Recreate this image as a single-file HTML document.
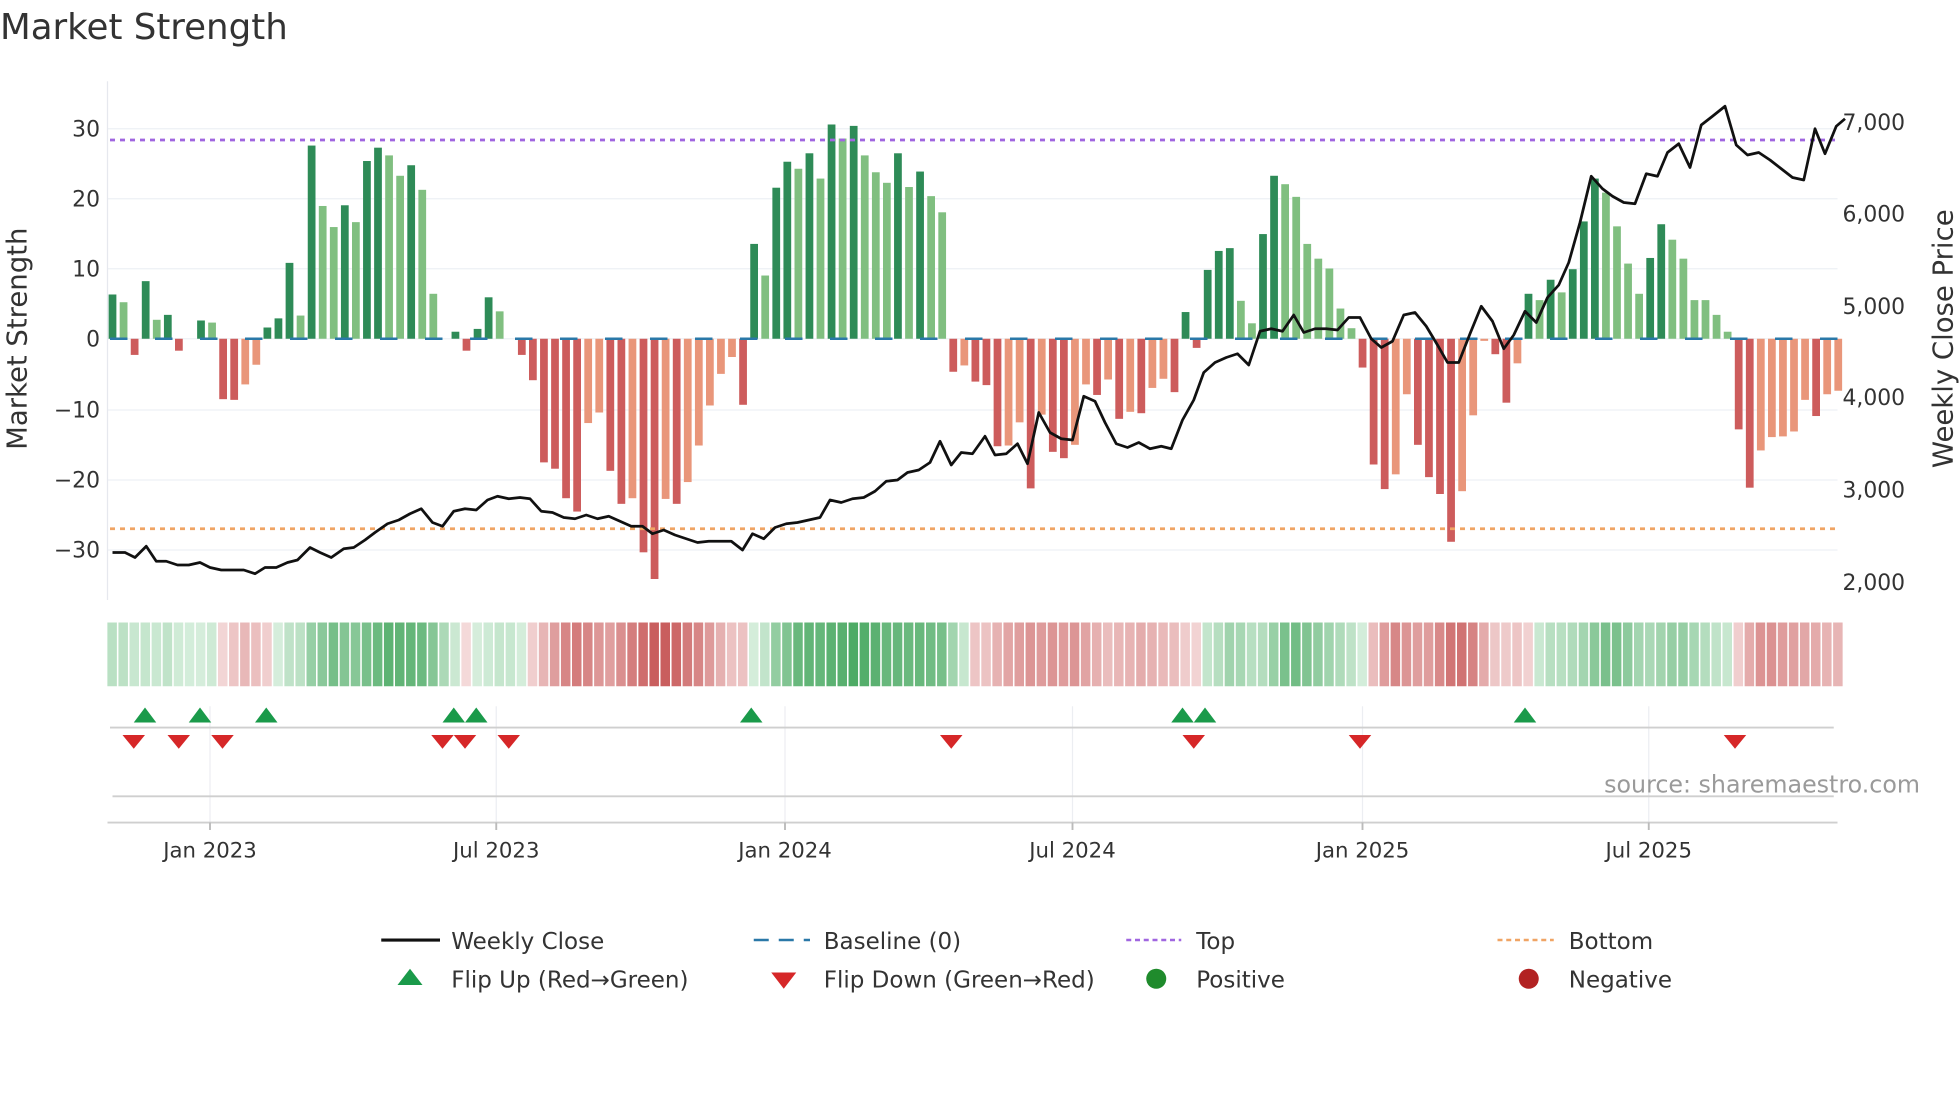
<!DOCTYPE html>
<html><head><meta charset="utf-8"><style>
html,body{margin:0;padding:0;background:#fff;width:1960px;height:1102px;overflow:hidden}
svg{display:block}
text{font-family:"DejaVu Sans","Liberation Sans",sans-serif;fill:#333}
</style></head><body>
<svg id="s" width="1960" height="1102" viewBox="0 0 1568 881.6" xmlns="http://www.w3.org/2000/svg">
<text x="0" y="31" font-size="28.5" fill="#333">Market Strength</text>
<g stroke="#edf0f5" stroke-width="1">
<line x1="86" x2="1470" y1="103" y2="103"/><line x1="86" x2="1470" y1="159" y2="159"/><line x1="86" x2="1470" y1="215" y2="215"/><line x1="86" x2="1470" y1="271" y2="271"/><line x1="86" x2="1470" y1="328" y2="328"/><line x1="86" x2="1470" y1="384" y2="384"/><line x1="86" x2="1470" y1="440" y2="440"/>
</g>
<line x1="86" x2="86" y1="65" y2="480" stroke="#e6e8ee" stroke-width="1"/>
<g font-size="17.5" text-anchor="end">
<text x="80" y="109">30</text><text x="80" y="165">20</text><text x="80" y="221">10</text><text x="80" y="277">0</text><text x="80" y="334">−10</text><text x="80" y="390">−20</text><text x="80" y="446">−30</text>
</g>
<g font-size="17.5">
<text x="1474" y="104">7,000</text><text x="1474" y="177">6,000</text><text x="1474" y="251">5,000</text><text x="1474" y="324">4,000</text><text x="1474" y="398">3,000</text><text x="1474" y="472">2,000</text>
</g>
<text transform="translate(21,271) rotate(-90)" font-size="22" text-anchor="middle">Market Strength</text>
<text transform="translate(1562,271) rotate(-90)" font-size="22" text-anchor="middle">Weekly Close Price</text>
<g id="bars"></g>
<line x1="88" x2="1470" y1="271" y2="271" stroke="#2a78a8" stroke-width="2" stroke-dasharray="14 22"/>
<line x1="88" x2="1470" y1="112" y2="112" stroke="#a066e0" stroke-width="2.2" stroke-dasharray="4 4"/>
<line x1="88" x2="1470" y1="423" y2="423" stroke="#f0a464" stroke-width="2.2" stroke-dasharray="4 4"/>
<polyline id="price" fill="none" stroke="#111" stroke-width="2.2" stroke-linejoin="round"/>
<g id="strip"></g>
<g stroke="#eceef2" stroke-width="1">
<line x1="168" x2="168" y1="565" y2="660"/><line x1="397" x2="397" y1="565" y2="660"/><line x1="628" x2="628" y1="565" y2="660"/><line x1="858" x2="858" y1="565" y2="660"/><line x1="1090" x2="1090" y1="565" y2="660"/><line x1="1319" x2="1319" y1="565" y2="660"/>
</g>
<line x1="88" x2="1467" y1="582" y2="582" stroke="#cfcfcf" stroke-width="1.5"/>
<line x1="90" x2="1467" y1="637" y2="637" stroke="#cfcfcf" stroke-width="1.5"/>
<line x1="86" x2="1470" y1="658" y2="658" stroke="#cfcfcf" stroke-width="1.5"/>
<g stroke="#bbb" stroke-width="1.5">
<line x1="168" x2="168" y1="658" y2="664"/><line x1="397" x2="397" y1="658" y2="664"/><line x1="628" x2="628" y1="658" y2="664"/><line x1="858" x2="858" y1="658" y2="664"/><line x1="1090" x2="1090" y1="658" y2="664"/><line x1="1319" x2="1319" y1="658" y2="664"/>
</g>
<g id="flips"></g>
<text x="1536" y="634" font-size="19" text-anchor="end" style="fill:#9a9a9a">source: sharemaestro.com</text>
<g font-size="17" text-anchor="middle">
<text x="168" y="686">Jan 2023</text><text x="397" y="686">Jul 2023</text><text x="628" y="686">Jan 2024</text><text x="858" y="686">Jul 2024</text><text x="1090" y="686">Jan 2025</text><text x="1319" y="686">Jul 2025</text>
</g>
<g font-size="18.4">
<line x1="305" x2="352" y1="752" y2="752" stroke="#111" stroke-width="2.5"/>
<text x="361" y="759">Weekly Close</text>
<line x1="603" x2="648" y1="752" y2="752" stroke="#2a78a8" stroke-width="2" stroke-dasharray="12 8"/>
<text x="659" y="759">Baseline (0)</text>
<line x1="901" x2="945" y1="752" y2="752" stroke="#a066e0" stroke-width="2" stroke-dasharray="4 3"/>
<text x="957" y="759">Top</text>
<line x1="1198" x2="1243" y1="752" y2="752" stroke="#f0a464" stroke-width="2" stroke-dasharray="4 3"/>
<text x="1255" y="759">Bottom</text>
<polygon points="318,788 338,788 328,775" fill="#1a9a4a"/>
<text x="361" y="790">Flip Up (Red→Green)</text>
<polygon points="617,778 637,778 627,791" fill="#d62728"/>
<text x="659" y="790">Flip Down (Green→Red)</text>
<circle cx="925" cy="783" r="8" fill="#1f8b2c"/>
<text x="957" y="790">Positive</text>
<circle cx="1223" cy="783" r="8" fill="#b22222"/>
<text x="1255" y="790">Negative</text>
</g>
</svg>
<script>
var d="G6.3 L5.2 R-2.3 G8.2 L2.7 G3.4 R-1.7 Z0 G2.6 L2.3 R-8.6 R-8.7 O-6.5 O-3.7 G1.6 G2.9 G10.8 L3.3 G27.5 L18.9 L15.9 G19 L16.6 G25.3 G27.2 L26.1 L23.2 G24.7 L21.2 L6.4 Z0 G1 R-1.7 G1.4 G5.9 L3.9 Z0 R-2.3 R-5.9 R-17.6 R-18.5 R-22.7 R-24.6 O-12 O-10.5 R-18.8 R-23.5 O-22.7 R-30.4 R-34.2 O-22.8 R-23.5 O-20.4 O-15.2 O-9.5 O-5 O-2.6 R-9.4 G13.5 L9 G21.5 G25.2 L24.2 G26.4 L22.8 G30.5 L28.5 G30.3 L26.1 L23.7 L22.2 G26.4 L21.6 G23.8 L20.3 L18 R-4.7 O-3.8 R-6.1 R-6.6 R-15.3 O-15.2 O-11.9 R-21.3 O-10.8 R-16.1 R-17 O-15.1 O-6.5 R-8 O-5.8 R-11.4 O-10.4 R-10.6 O-7 O-5.7 R-7.6 G3.8 R-1.3 G9.8 G12.5 G12.9 L5.4 L2.2 G14.9 G23.2 L22 L20.2 L13.5 L11.4 L10 L4.3 L1.5 R-4.1 R-17.9 R-21.4 O-19.3 O-7.9 R-15.1 R-19.7 R-22.1 R-28.9 O-21.7 O-10.9 O-0.3 R-2.2 R-9.1 O-3.5 G6.4 L5.5 G8.4 L6.6 G9.9 G16.7 G22.8 L20.8 L16 L10.7 L6.4 G11.5 G16.3 L14.1 L11.4 L5.5 L5.5 L3.4 L1 R-12.9 R-21.2 O-15.9 O-14 O-13.9 O-13.2 O-8.7 R-11 O-7.9 O-7.4".split(" ");
var C={G:"#2e8b57",L:"#80bf80",R:"#cd5c5c",O:"#e9967a",Z:"#fff"};
var b="",st="",sp=8.85,x0=90;
var vals=d.map(function(t){return parseFloat(t.slice(1))});
d.forEach(function(t,i){var v=vals[i],x=x0+i*sp;
 if(v!==0){var y=271-v*5.62;b+='<rect x="'+(x-3.1).toFixed(2)+'" y="'+Math.min(y,271).toFixed(2)+'" width="6.2" height="'+Math.abs(271-y).toFixed(2)+'" fill="'+C[t[0]]+'"/>';}
 var s=0,n=0;for(var k=Math.max(0,i-2);k<=i;k++){s+=vals[k];n++}s/=n;
 var a=Math.min(1,Math.abs(s)/30),col;
 if(s>=0){col="rgb("+Math.round(214-(214-76)*a)+","+Math.round(238-(238-170)*a)+","+Math.round(220-(220-100)*a)+")";}
 else{col="rgb("+Math.round(244-(244-200)*a)+","+Math.round(218-(218-90)*a)+","+Math.round(218-(218-90)*a)+")";}
 st+='<rect x="'+(x-4.1).toFixed(2)+'" y="498" width="7.6" height="51" fill="'+col+'"/>';
});
document.getElementById("bars").innerHTML=b;
document.getElementById("strip").innerHTML=st;
var p="90,442 100,442 108,446 117,437 125,449 133,449 142,452 151,452 160,450 168,454 177,456 186,456 195,456 204,459 212,454 221,454 230,450 238,448 248,438 256,442 265,446 275,439 283,438 292,432 300,426 310,419 319,416 328,411 337,407 346,418 354,421 363,409 372,407 381,408 390,400 398,397 407,399 416,398 424,399 433,409 442,410 451,414 460,415 469,412 478,415 487,413 496,417 505,421 514,421 522,427 531,424 540,428 549,431 558,434 567,433 576,433 585,433 594,440 602,427 611,431 620,422 629,419 638,418 647,416 656,414 664,400 673,402 682,399 691,398 700,393 709,385 718,384 726,378 735,376 744,370 752,353 761,372 769,362 778,363 788,349 796,364 805,363 814,355 822,371 831,330 840,346 849,351 858,352 867,317 876,321 884,338 893,355 902,358 911,354 920,359 929,357 937,359 946,336 955,320 963,298 972,290 981,286 990,283 999,292 1008,265 1017,263 1026,265 1035,252 1043,266 1052,263 1061,263 1070,264 1079,254 1088,254 1097,271 1105,278 1114,273 1123,252 1132,250 1141,261 1150,276 1158,290 1167,290 1176,267 1185,245 1194,257 1203,279 1211,268 1220,249 1229,258 1238,238 1247,228 1255,210 1264,178 1273,141 1282,151 1290,157 1299,162 1308,163 1317,139 1326,141 1334,122 1343,115 1352,134 1361,100 1370,93 1380,85 1389,116 1398,124 1407,122 1416,128 1425,135 1434,142 1443,144 1452,103 1460,123 1469,101 1476,95";
document.getElementById("price").setAttribute("points",p);
var f="";
[116,160,213,363,381,601,946,964,1220].forEach(function(x){f+='<polygon points="'+(x-9)+',578 '+(x+9)+',578 '+x+',566" fill="#1a9a4a"/>'});
[107,143,178,354,372,407,761,955,1088,1388].forEach(function(x){f+='<polygon points="'+(x-9)+',588 '+(x+9)+',588 '+x+',599" fill="#d62728"/>'});
document.getElementById("flips").innerHTML=f;
</script>
</body></html>
